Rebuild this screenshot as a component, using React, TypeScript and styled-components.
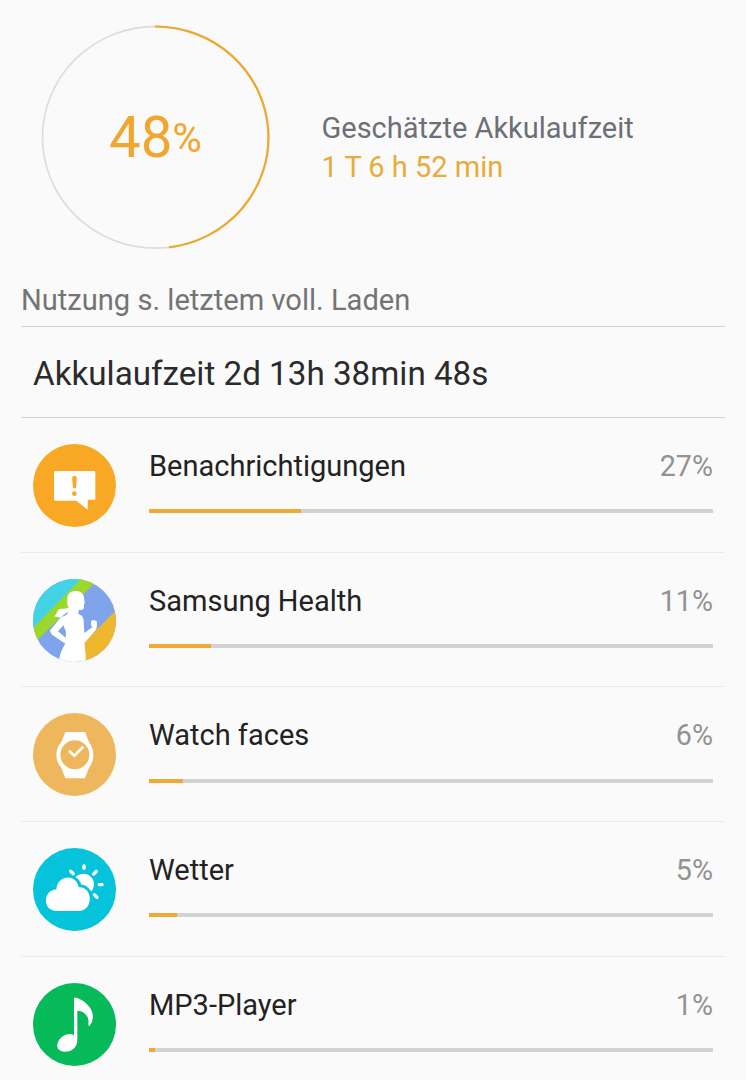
import React from "react";
import styled, { createGlobalStyle } from "styled-components";

const GlobalStyle = createGlobalStyle`
  * { box-sizing: border-box; }
  body {
    margin: 0;
    background: #fafafa;
    font-family: Roboto, "Liberation Sans", sans-serif;
  }
`;

const Screen = styled.main`
  height: 1080px;
  overflow: hidden;
  padding: 0 21px;
  background: #fafafa;
`;

const Summary = styled.section`
  display: flex;
  height: 273px;
  padding: 24px 0 0 19px;
`;

const Gauge = styled.div`
  display: grid;
  width: 231px;
  height: 227px;
  > * { grid-area: 1 / 1; }
`;

const GaugeValue = styled.div`
  display: flex;
  justify-content: center;
  align-items: baseline;
  height: 66px;
  margin-top: 81px;
  line-height: 66px;
  color: #f2a62e;
  font-size: 56.5px;
`;

const GaugeUnit = styled.span`
  position: relative;
  top: -5px;
  font-size: 40px;
  line-height: 1;
`;

const Estimate = styled.div`
  margin: 85px 0 0 50.5px;
  font-size: 29px;
  line-height: 39.4px;
  color: #6c7076;
  white-space: nowrap;
`;

const Remaining = styled.div`
  color: #e8ac3a;
`;

const SectionTitle = styled.h2`
  margin: 0;
  height: 54px;
  border-bottom: 1px solid #d6d6d6;
  font-size: 29.1px;
  font-weight: 400;
  line-height: 54px;
  color: #747474;
`;

const Runtime = styled.div`
  height: 91px;
  padding: 1px 12px 0;
  border-bottom: 1px solid #d6d6d6;
  font-size: 33.2px;
  line-height: 92px;
  color: #2b2b2b;
`;

const List = styled.ul`
  margin: 0;
  padding: 0;
  list-style: none;
`;

const Row = styled.li`
  display: flex;
  gap: 33px;
  height: 134.7px;
  padding: 26px 12px 0;
  border-bottom: 1px solid #ebebeb;
`;

const Icon = styled.svg`
  flex: none;
  width: 83px;
  height: 83px;
`;

const Usage = styled.div`
  flex: 1;
`;

const Labels = styled.div`
  display: flex;
  justify-content: space-between;
  height: 65.2px;
  font-size: 29px;
  line-height: 45.4px;
  color: #222;
`;

const Percent = styled.span`
  font-size: 28.7px;
  color: #929292;
`;

const Track = styled.div`
  height: 4px;
  background: #d2d2d2;
`;

const Fill = styled.div`
  height: 100%;
  background: #f0a935;
`;

const NotificationIcon = () => (
  <Icon viewBox="0 0 249 249">
    <circle cx="124.5" cy="124.5" r="124.5" fill="#f9a825" />
    <path d="M67 81H183Q187 81 187 85V167H164V197L130 170H67Q63 170 63 166V85Q63 81 67 81Z" fill="#fff" />
    <path d="M117.500 101Q118 95 124.500 95T131.500 101L129.500 129Q129 133 124.500 133T119.500 129Z" fill="#f9a825" />
    <circle cx="124" cy="149" r="7" fill="#f9a825" />
  </Icon>
);

const HealthIcon = () => (
  <Icon viewBox="0 0 249 249">
    <clipPath id="health-disc">
      <circle cx="124.5" cy="124.5" r="124.5" />
    </clipPath>
    <g clipPath="url(#health-disc)">
      <path d="M0 0H249V249H0Z" fill="#80a4ec" />
      <path d="M0 0H146L0 150Z" fill="#43d3e4" />
      <path d="M144 0H197L14 183L0 160V148Z" fill="#9bd82b" />
      <path d="M249 94L150 193V249H249Z" fill="#edb72f" />
      <path
        d="M103 65C101 47 111 36 126 36C142 35 151 43 153 55L154 65L156 72L153 75L153 86Q151 93 143 93H137L136 105C147 108 151 115 152 126L154 162L178 145L174 139V127Q177 122 183 124L191 126L192 139L190 151L155 191C154 207 160 220 158 249H78C80 225 87 209 97 194L64 172Q49 162 52 153Q67 136 81 117Q89 110 96 105L105 98L103 106C89 116 75 116 62 112C75 107 68 91 84 89Q99 90 107 86C103 80 102 73 103 65ZM91 139L75 157L98 176L99 158Z"
        fill="#fff"
        fillRule="evenodd"
      />
    </g>
  </Icon>
);

const WatchIcon = () => (
  <Icon viewBox="0 0 249 249">
    <circle cx="124.5" cy="124.5" r="124.5" fill="#efb75d" />
    <path d="M97 57H156L168 88Q181 104 181 126T168 164L156 196H97L85 164Q70 149 70 126T85 88Z" fill="#fff" />
    <circle cx="125.5" cy="125.5" r="43.5" fill="#efb75d" />
    <path d="M108 113L124 128L151 101" fill="none" stroke="#fff" strokeWidth="8" />
  </Icon>
);

const WeatherIcon = () => (
  <Icon viewBox="0 0 249 249">
    <circle cx="124.5" cy="124.5" r="124.5" fill="#06c3dc" />
    <circle cx="151" cy="109" r="32" fill="#fff" />
    <path
      d="M68 190C28 187 31 127 71 124C75 78 132 78 138 118C181 115 181 187 140 190Z"
      fill="#06c3dc"
      stroke="#06c3dc"
      strokeWidth="17"
      strokeLinejoin="round"
    />
    <path
      d="M153 53V61M182 78L190 70M199 110H207M184 140L192 148M113 70L121 77"
      stroke="#fff"
      strokeWidth="10"
      strokeLinecap="round"
    />
    <path d="M68 189C29 187 29 127 70 124C74 78 131 78 137 118C181 115 181 187 140 189Z" fill="#fff" />
  </Icon>
);

const MusicIcon = () => (
  <Icon viewBox="0 0 249 249">
    <circle cx="124.5" cy="124.5" r="124.5" fill="#07ba59" />
    <path
      d="M123 47Q124 42 130 44C151 50 180 72 180 101Q179 117 170 129Q165 129 166 123C170 103 155 83 133 83V170C133 194 116 206 96 206C79 206 71 196 73 184C76 166 95 152 113 153Q120 154 123 158Z"
      fill="#fff"
    />
  </Icon>
);

const apps = [
  { name: "Benachrichtigungen", percent: 27, AppIcon: NotificationIcon },
  { name: "Samsung Health", percent: 11, AppIcon: HealthIcon },
  { name: "Watch faces", percent: 6, AppIcon: WatchIcon },
  { name: "Wetter", percent: 5, AppIcon: WeatherIcon },
  { name: "MP3-Player", percent: 1, AppIcon: MusicIcon },
];

export default function App() {
  return (
    <Screen>
      <GlobalStyle />
      <Summary>
        <Gauge>
          <svg width="231" height="227" viewBox="0 0 231 227" fill="none">
            <ellipse cx="115.5" cy="113.3" rx="113" ry="110.8" stroke="#dedede" strokeWidth="1.8" />
            <path d="M115 2.5A113 110.8 0 0 1 129 223.3" stroke="#eca92e" strokeWidth="2.2" />
          </svg>
          <GaugeValue>
            48<GaugeUnit>%</GaugeUnit>
          </GaugeValue>
        </Gauge>
        <Estimate>
          Geschätzte Akkulaufzeit
          <Remaining>1 T 6 h 52 min</Remaining>
        </Estimate>
      </Summary>
      <SectionTitle>Nutzung s. letztem voll. Laden</SectionTitle>
      <Runtime>Akkulaufzeit 2d 13h 38min 48s</Runtime>
      <List>
        {apps.map(({ name, percent, AppIcon }) => (
          <Row key={name}>
            <AppIcon />
            <Usage>
              <Labels>
                <span>{name}</span>
                <Percent>{percent}%</Percent>
              </Labels>
              <Track>
                <Fill style={{ width: `${percent}%` }} />
              </Track>
            </Usage>
          </Row>
        ))}
      </List>
    </Screen>
  );
}
